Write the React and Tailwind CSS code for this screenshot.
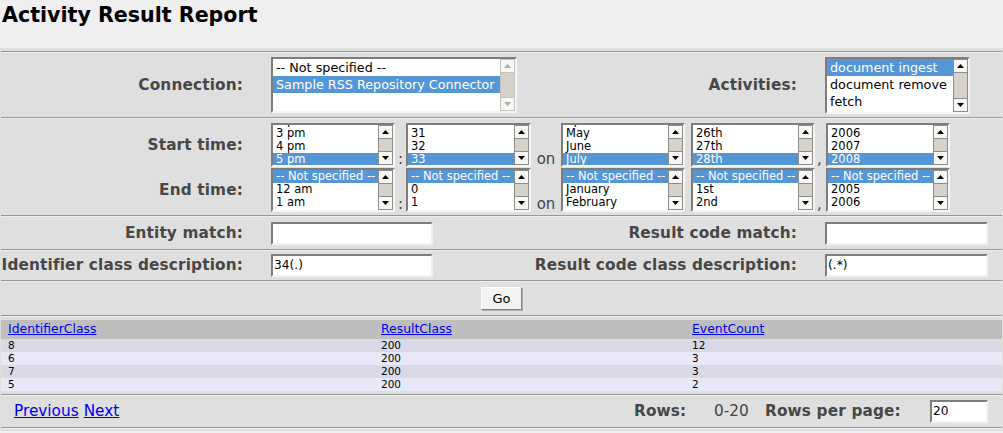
import React from "react";

function Arrow({ up, dim }) {
  return (
    <svg width="7" height="4" viewBox="0 0 7 4">
      <path d={up ? "M3.5 0L7 4H0Z" : "M0 0H7L3.5 4Z"} fill={dim ? "#ababab" : "#000"} />
    </svg>
  );
}

function Scrollbar({ dim }) {
  const b = `flex h-[14px] shrink-0 items-center justify-center border bg-[#f7f7f5] ${
    dim ? "border-[#c4c2bc]" : "border-[#8e8c88]"
  }`;
  return (
    <div className="flex w-[15px] shrink-0 flex-col bg-[#d6d2ca]">
      <div className={b}>
        <Arrow up dim={dim} />
      </div>
      <div className={`flex-1 border-x ${dim ? "border-[#c4c2bc]" : "border-[#8e8c88]"}`} />
      <div className={b}>
        <Arrow dim={dim} />
      </div>
    </div>
  );
}

function ListBox({ size, items, sel, row, shift = "", dim }) {
  return (
    <div
      className={`flex shrink-0 border-2 border-t-[#7d7d7d] border-l-[#7d7d7d] border-b-[#f6f6f6] border-r-[#f6f6f6] bg-white ${size}`}
    >
      <div className="min-w-0 flex-1 overflow-hidden">
        <div className={shift}>
          {items.map((t, i) => (
            <div
              key={i}
              className={`${row} overflow-hidden whitespace-nowrap pl-[3px] ${
                i === sel ? "bg-[#5596d7] text-white" : "text-black"
              }`}
            >
              {t}
            </div>
          ))}
        </div>
      </div>
      <Scrollbar dim={dim} />
    </div>
  );
}

function TextInput({ size, value }) {
  return (
    <div
      className={`flex shrink-0 items-center overflow-hidden border-2 border-t-[#7d7d7d] border-l-[#7d7d7d] border-b-[#f2f2f2] border-r-[#f2f2f2] bg-white pl-[1px] text-[12.2px] text-black ${size}`}
    >
      {value}
    </div>
  );
}

function Sep() {
  return <div className="h-[2px] border-t border-b border-t-[#979797] border-b-[#efefef]" />;
}

const LBL = "font-bold text-[15.3px] tracking-[0.15px] text-[#474747] whitespace-nowrap";
const TROW = "h-[13px] leading-[13px] text-[11.5px]";

function TimeRow({ label, hour, minute, month, day, year, sel, shift }) {
  return (
    <div className="flex h-[44px] items-end">
      <div className={`w-[242px] self-center text-right ${LBL}`}>{label}</div>
      <div className="w-[28px]" />
      <ListBox size="w-[124px] h-[44px]" items={hour} sel={sel} row={TROW} shift={shift} />
      <span className="w-[11px] text-center text-[15px] leading-[16px] text-[#444]">:</span>
      <ListBox size="w-[125px] h-[44px]" items={minute} sel={sel} row={TROW} shift={shift} />
      <span className="w-[30px] text-center text-[15px] leading-[15px] text-[#444]">on</span>
      <ListBox size="w-[124px] h-[44px]" items={month} sel={sel} row={TROW} shift={shift} />
      <div className="w-[6px]" />
      <ListBox size="w-[124px] h-[44px]" items={day} sel={sel} row={TROW} shift={shift} />
      <span className="w-[11px] pl-[2px] text-[15px] leading-[16px] text-[#444]">,</span>
      <ListBox size="w-[124px] h-[44px]" items={year} sel={sel} row={TROW} shift={shift} />
    </div>
  );
}

const NS = "-- Not specified --";

export default function App() {
  const rows = [
    ["8", "200", "12"],
    ["6", "200", "3"],
    ["7", "200", "3"],
    ["5", "200", "2"],
  ];
  return (
    <div className="h-[433px] w-[1003px] overflow-hidden bg-[#efefef] font-['DejaVu_Sans',Verdana,sans-serif]">
      <h1 className="h-[48px] pl-[2px] pt-[3px] text-[20.6px] font-bold leading-[24px] text-black">
        Activity Result Report
      </h1>
      <div className="bg-[#dfdfdf] px-[1px] pb-[2px] pt-[3px]">
        <Sep />
        {/* Connection / Activities */}
        <div className="flex h-[64px] items-center">
          <div className={`w-[242px] text-right ${LBL}`}>Connection:</div>
          <div className="w-[28px]" />
          <ListBox
            size="w-[246px] h-[56px]"
            items={[NS, "Sample RSS Repository Connector"]}
            sel={1}
            row="h-[17px] leading-[17px] text-[12.75px]"
            dim
          />
          <div className={`w-[280px] text-right ${LBL}`}>Activities:</div>
          <div className="w-[28px]" />
          <ListBox
            size="w-[145px] h-[57px]"
            items={["document ingest", "document remove", "fetch"]}
            sel={0}
            row="h-[17px] leading-[17px] text-[12.75px]"
          />
        </div>
        <Sep />
        {/* Times */}
        <div className="flex h-[96px] flex-col gap-[1px] pt-[4px]">
          <TimeRow
            label="Start time:"
            hour={["2 pm", "3 pm", "4 pm", "5 pm"]}
            minute={["30", "31", "32", "33"]}
            month={["April", "May", "June", "July"]}
            day={["25th", "26th", "27th", "28th"]}
            year={["2005", "2006", "2007", "2008"]}
            sel={3}
            shift="mt-[-11px]"
          />
          <TimeRow
            label="End time:"
            hour={[NS, "12 am", "1 am"]}
            minute={[NS, "0", "1"]}
            month={[NS, "January", "February"]}
            day={[NS, "1st", "2nd"]}
            year={[NS, "2005", "2006"]}
            sel={0}
          />
        </div>
        <Sep />
        {/* Entity / result code match */}
        <div className="flex h-[32px] items-center">
          <div className={`w-[242px] text-right ${LBL}`}>Entity match:</div>
          <div className="w-[28px]" />
          <TextInput size="w-[162px] h-[23px]" value="" />
          <div className={`w-[364px] text-right ${LBL}`}>Result code match:</div>
          <div className="w-[28px]" />
          <TextInput size="w-[163px] h-[23px]" value="" />
        </div>
        <Sep />
        <div className="flex h-[29px] items-center">
          <div className={`w-[242px] text-right ${LBL}`}>Identifier class description:</div>
          <div className="w-[28px]" />
          <TextInput size="w-[162px] h-[23px]" value="34(.)" />
          <div className={`w-[364px] text-right ${LBL}`}>Result code class description:</div>
          <div className="w-[28px]" />
          <TextInput size="w-[163px] h-[23px]" value="(.*)" />
        </div>
        <Sep />
        <div className="flex h-[33px] items-center justify-center">
          <div className="flex h-[23px] w-[41px] items-center justify-center border border-t-[#fbfbfb] border-l-[#fbfbfb] border-b-[#808080] border-r-[#808080] bg-[#f3f3f1] text-[13px] text-black shadow-[1px_1px_0_#b0b0b0]">
            Go
          </div>
        </div>
        <Sep />
        {/* Results table */}
        <div className="pb-[3px] pt-[3px]">
          <div className="grid h-[19px] grid-cols-[373px_311px_1fr] items-center bg-[#bebebe] text-[12.4px]">
            {["IdentifierClass", "ResultClass", "EventCount"].map((h) => (
              <div key={h} className="pl-[7px]">
                <span className="text-[#0000ee] underline">{h}</span>
              </div>
            ))}
          </div>
          {rows.map((r, i) => (
            <div
              key={i}
              className={`grid h-[13px] grid-cols-[373px_311px_1fr] items-center text-[10.5px] leading-[13px] text-black ${
                i % 2 === 0 ? "bg-[#d9d9e6]" : "bg-[#e8e8f8]"
              }`}
            >
              {r.map((c, j) => (
                <div key={j} className="pl-[7px]">
                  {c}
                </div>
              ))}
            </div>
          ))}
        </div>
        <Sep />
        {/* Footer */}
        <div className="flex h-[31px] items-center">
          <div className="flex w-[633px] gap-[5px] pl-[13px] text-[15.3px]">
            <span className="text-[#0000ee] underline">Previous</span>
            <span className="text-[#0000ee] underline">Next</span>
          </div>
          <span className={`w-[80px] ${LBL}`}>Rows:</span>
          <span className="w-[51px] text-[15.3px] text-[#444]">0-20</span>
          <span className={`w-[165px] ${LBL}`}>Rows per page:</span>
          <TextInput size="w-[58px] h-[23px]" value="20" />
        </div>
        <Sep />
      </div>
    </div>
  );
}
